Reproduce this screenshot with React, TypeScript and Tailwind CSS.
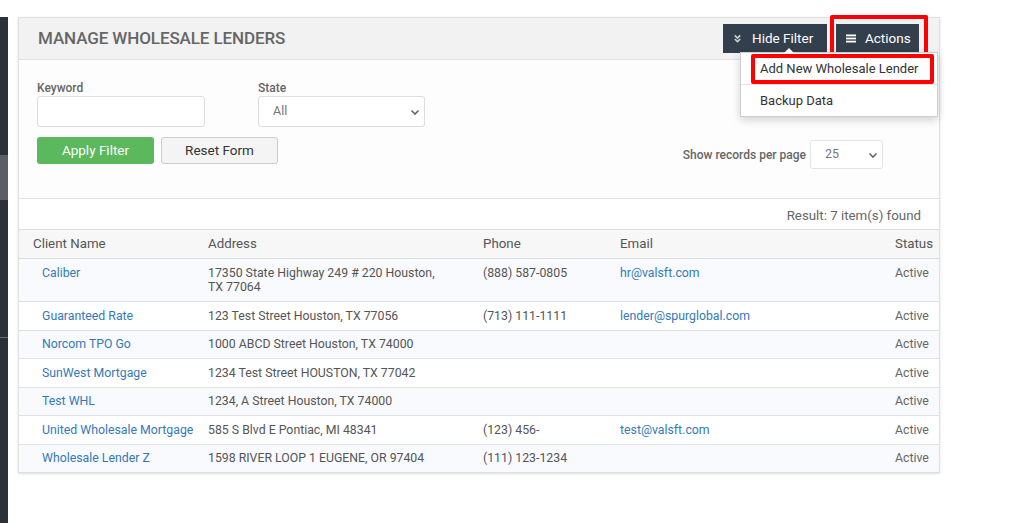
import React from 'react'

const rows = [
    { name: 'Caliber', address: '17350 State Highway 249 # 220 Houston, TX 77064', phone: '(888) 587-0805', email: 'hr@valsft.com' },
    { name: 'Guaranteed Rate', address: '123 Test Street Houston, TX 77056', phone: '(713) 111-1111', email: 'lender@spurglobal.com' },
    { name: 'Norcom TPO Go', address: '1000 ABCD Street Houston, TX 74000', phone: '', email: '' },
    { name: 'SunWest Mortgage', address: '1234 Test Street HOUSTON, TX 77042', phone: '', email: '' },
    { name: 'Test WHL', address: '1234, A Street Houston, TX 74000', phone: '', email: '' },
    { name: 'United Wholesale Mortgage', address: '585 S Blvd E Pontiac, MI 48341', phone: '(123) 456-', email: 'test@valsft.com' },
    { name: 'Wholesale Lender Z', address: '1598 RIVER LOOP 1 EUGENE, OR 97404', phone: '(111) 123-1234', email: '' },
]

function Chevron() {
    return (
        <svg width="10" height="10" viewBox="0 0 10 10" className="text-[#666]">
            <path d="M1.5 3.5 L5 7 L8.5 3.5" fill="none" stroke="currentColor" strokeWidth="1.6" />
        </svg>
    )
}

export default function App() {
    return (
        <div className="flex min-h-screen bg-white font-['Roboto',sans-serif] text-[#555]">
            {/* sidebar edge */}
            <div className="mt-[17px] flex w-2 flex-col bg-[#2c3138]">
                <div className="h-[138px]" />
                <div className="h-[45px] bg-[#5b5e64]" />
                <div className="h-[137px]" />
                <div className="h-px bg-[#6a6d72]" />
            </div>

            <div className="ml-[10px] mt-[17px] flex h-[456px] w-[922px] flex-col border border-[#e0e0e0] bg-[#fdfdfd] shadow-sm">
                {/* header */}
                <div className="flex h-[42px] shrink-0 items-center justify-between border-b border-[#e3e3e3] bg-[#f2f2f2] pl-[19px] pr-[20px]">
                    <h1 className="text-[17px] font-medium tracking-[-0.1px] text-[#666]">MANAGE WHOLESALE LENDERS</h1>
                    <div className="flex gap-[9px]">
                        <button className="flex h-[29px] w-[104px] items-center gap-[10px] bg-[#343f4d] pl-[10px] text-[13.5px] text-white">
                            <svg width="9" height="9" viewBox="0 0 10 10" className="text-[#c9ced6]">
                                <path d="M2 1.5 L5 4.5 L8 1.5 M2 5.5 L5 8.5 L8 5.5" fill="none" stroke="currentColor" strokeWidth="1.8" />
                            </svg>
                            Hide Filter
                        </button>
                        <div className="relative">
                            <button className="flex h-[29px] w-[83px] items-center gap-[9px] bg-[#343f4d] pl-[10px] text-[13.5px] text-white">
                                <svg width="10" height="9" viewBox="0 0 10 9">
                                    <rect x="0" y="0.5" width="10" height="1.8" fill="white" />
                                    <rect x="0" y="3.6" width="10" height="1.8" fill="white" />
                                    <rect x="0" y="6.7" width="10" height="1.8" fill="white" />
                                </svg>
                                Actions
                            </button>
                            <div className="pointer-events-none absolute -left-[6px] -right-[9px] -top-[9px] bottom-[-3px] rounded-[2px] border-4 border-[#ff0000]" />

                            {/* dropdown */}
                            <div className="absolute right-[-19px] top-[28px] z-10 w-[198px] border border-[#cfcfcf] bg-white shadow-[0_3px_8px_rgba(0,0,0,0.18)]">
                                <div className="absolute -top-[5px] left-[43px] h-0 w-0 border-x-[5px] border-b-[5px] border-x-transparent border-b-white" />
                                <div className="relative flex h-[31px] items-center pl-[19px] text-[13px] text-[#333]">
                                    Add New Wholesale Lender
                                    <div className="absolute left-[10px] top-[1px] h-[30px] w-[183px] rounded-[2px] border-4 border-[#ff0000]" />
                                </div>
                                <div className="h-px bg-[#e5e5e5]" />
                                <div className="flex h-[31px] items-center pl-[19px] text-[13px] text-[#333]">Backup Data</div>
                            </div>
                        </div>
                    </div>
                </div>

                {/* filter */}
                <div className="flex shrink-0 border-b border-[#e3e3e3] px-[18px] pb-[29px] pt-[20px]">
                    <div>
                        <div className="flex gap-[53px]">
                            <div>
                                <label className="block text-[12px] font-medium leading-[16px] text-[#666]">Keyword</label>
                                <div className="h-[31px] w-[168px] rounded-[3px] border border-[#ddd] bg-white" />
                            </div>
                            <div>
                                <label className="block text-[12px] font-medium leading-[16px] text-[#666]">State</label>
                                <div className="flex h-[31px] w-[167px] items-center justify-between rounded-[3px] border border-[#ddd] bg-white pl-[14px] pr-[4px] text-[12.5px] text-[#777]">
                                    All
                                    <Chevron />
                                </div>
                            </div>
                        </div>
                        <div className="mt-[10px] flex gap-[7px]">
                            <button className="h-[27px] w-[117px] rounded-[3px] bg-[#5cb85c] text-[13.5px] text-white">Apply Filter</button>
                            <button className="h-[27px] w-[117px] rounded-[3px] border border-[#ccc] bg-[#f4f4f4] text-[13.5px] text-[#333]">Reset Form</button>
                        </div>
                    </div>
                    <div className="ml-auto mr-[38px] mt-[60px] flex items-center gap-[4px] self-start">
                        <span className="text-[12px] font-medium text-[#666]">Show records per page</span>
                        <div className="flex h-[29px] w-[73px] items-center justify-between rounded-[3px] border border-[#e3e3e3] bg-white pl-[14px] pr-[4px] text-[12.5px] text-[#777]">
                            25
                            <Chevron />
                        </div>
                    </div>
                </div>

                {/* results */}
                <div className="flex-1 bg-white">
                    <div className="flex h-[30px] items-end justify-end pb-[3px] pr-[18px] text-[13.3px] text-[#666]">Result: 7 item(s) found</div>
                    <table className="w-full table-fixed border-collapse text-left">
                        <colgroup>
                            <col className="w-[175px]" />
                            <col className="w-[275px]" />
                            <col className="w-[137px]" />
                            <col className="w-[275px]" />
                            <col />
                        </colgroup>
                        <thead>
                            <tr className="border-y border-[#ddd] bg-[#f7f7f7] text-[13.3px] text-[#555]">
                                <th className="py-[6px] pl-[14px] font-normal leading-[16px]">Client Name</th>
                                <th className="py-[6px] pl-[14px] font-normal leading-[16px]">Address</th>
                                <th className="py-[6px] pl-[14px] font-normal leading-[16px]">Phone</th>
                                <th className="py-[6px] pl-[14px] font-normal leading-[16px]">Email</th>
                                <th className="py-[6px] pl-[14px] font-normal leading-[16px]">Status</th>
                            </tr>
                        </thead>
                        <tbody className="text-[12.3px] leading-[14.5px]">
                            {rows.map((r, i) => (
                                <tr key={r.name} className={`border-b border-[#e2e2e2] align-top last:border-b-0 ${i % 2 === 0 ? 'bg-[#f8fafd]' : 'bg-white'}`}>
                                    <td className="whitespace-nowrap py-[6.5px] pl-[23px] text-[#3479b7]">{r.name}</td>
                                    <td className="py-[6.5px] pl-[14px] pr-[26px]">{r.address}</td>
                                    <td className="py-[6.5px] pl-[14px]">{r.phone}</td>
                                    <td className="py-[6.5px] pl-[14px] text-[#3479b7]">{r.email}</td>
                                    <td className="py-[6.5px] pl-[14px] text-[#666]">Active</td>
                                </tr>
                            ))}
                        </tbody>
                    </table>
                </div>
            </div>
        </div>
    )
}
